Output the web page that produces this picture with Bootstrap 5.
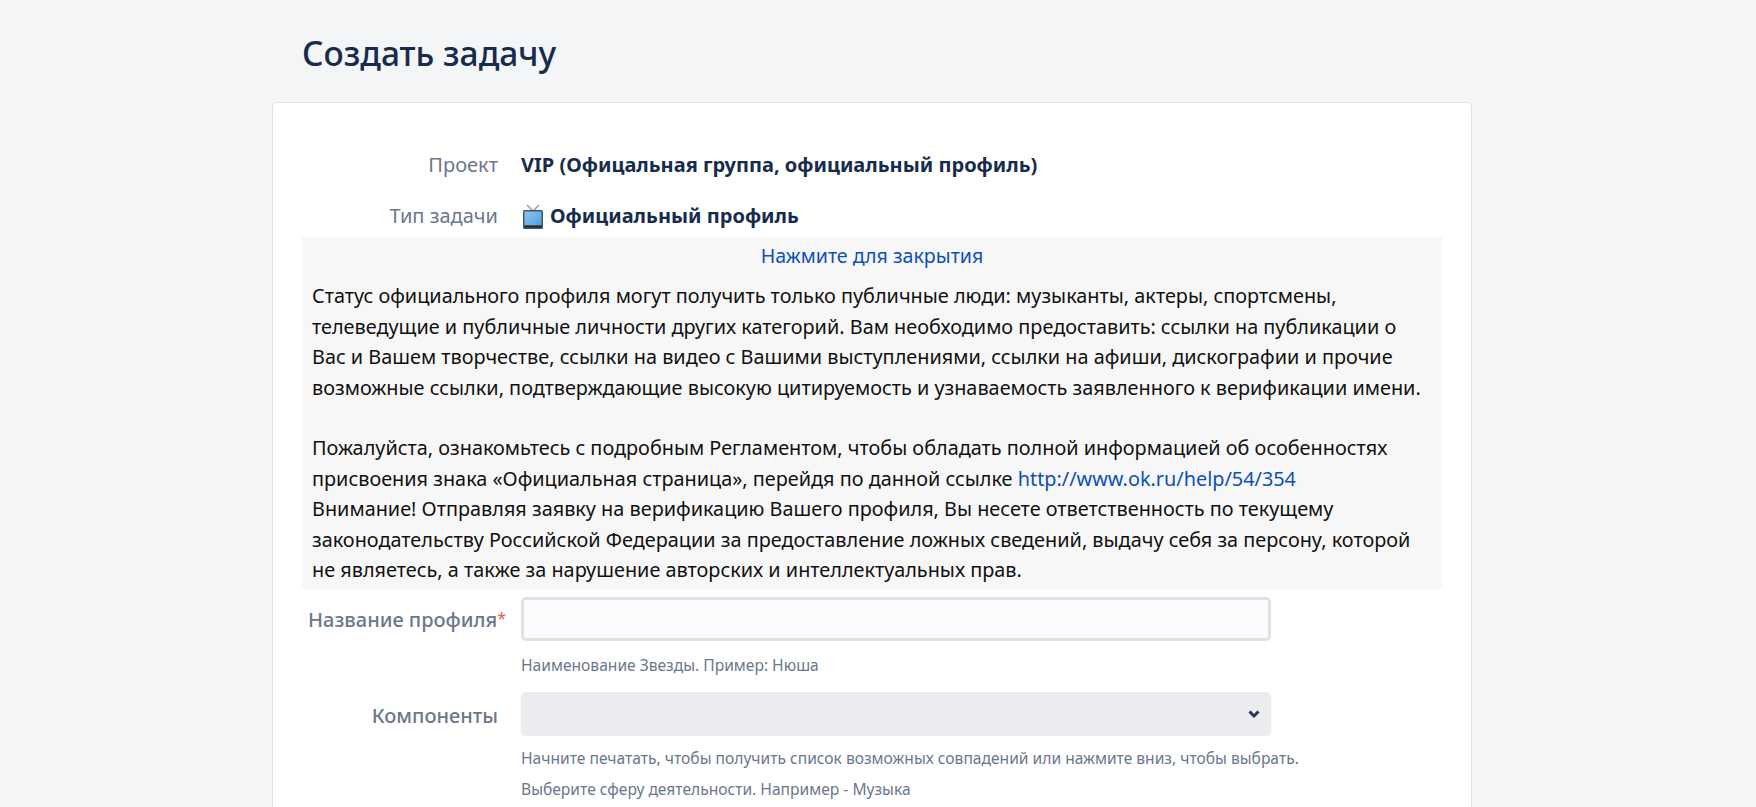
<!DOCTYPE html>
<html lang="ru">
  <head>
    <meta charset="utf-8"/>
    <title>Создать задачу</title>
    <link href="https://cdn.jsdelivr.net/npm/bootstrap@5.3.0/dist/css/bootstrap.min.css" rel="stylesheet"/>
    <style>
      html, body { height: 807px; overflow: hidden; }
      body { background: #f4f5f7; color: #172b4d; font-family: "Noto Sans", sans-serif; font-size: 20px; }
      .page-wrap { width: 1200px; margin-left: 272px; }
      .page-title { font-size: 33.5px; font-weight: 500; line-height: 42px; margin: 0; padding: 32px 30px 28px; color: #172b4d; }
      .form-panel { background: #fff; border: 1px solid #dfe1e6; border-radius: 5px; padding: 47px 29px 0; height: 800px; }
      .form-line { display: flex; align-items: center; }
      .info-line { height: 30px; }
      .first-line { margin-bottom: 21px; }
      .form-lbl { width: 196px; flex: none; text-align: right; color: #6b778c; font-size: 20px; font-weight: 500; white-space: nowrap; }
      .form-lbl.plain-lbl { font-weight: 400; }
      .form-lbl.name-lbl { padding-top: 2px; }
      .form-val { margin-left: 23px; font-size: 20px; font-weight: 700; }
      .tv-icon { margin: 0 7px 0 2px; }
      .hint-text { margin-left: 219px; font-size: 15.6px; color: #6b778c; line-height: 22px; }
      .hint-first { margin-top: 13px; }
      .hint-second { margin-top: 11px; }
      .hint-third { margin-top: 9px; }
      .desc-box { background: #f7f7f7; color: #111; font-size: 19.85px; line-height: 30.4px; padding: 4px 10px 0; height: 352px; margin-top: 6px; white-space: nowrap; }
      .close-row { margin-bottom: 10px; font-size: 19.6px; }
      .close-link { color: #0c50b8; text-decoration: none; }
      .req-star { color: #e5604a; font-weight: 400; font-size: 16px; margin-right: -8px; vertical-align: 3px; }
      .text-fld { width: 750px; height: 44px; margin-left: 23px; background: #fafbfc; border: 3px solid #dfe1e6; border-radius: 5px; }
      .select-fld { width: 750px; height: 44px; margin-left: 23px; background: #ebecf0; border-radius: 5px; padding-right: 11px; }
    </style>
  </head>
  <body>
    <div class="page-wrap">
      <h1 class="page-title">Создать задачу</h1>
      <div class="form-panel">
        <div class="form-line info-line first-line">
          <div class="form-lbl plain-lbl">Проект</div>
          <div class="form-val">VIP (Офицальная группа, официальный профиль)</div>
        </div>
        <div class="form-line info-line">
          <div class="form-lbl plain-lbl">Тип задачи</div>
          <div class="form-val d-flex align-items-center">
            <svg class="tv-icon" width="20" height="25" viewBox="0 0 20 25">
              <defs>
                <linearGradient id="tvScreen" x1="0" y1="0" x2="1" y2="1">
                  <stop offset="0" stop-color="#8cc8f2"/>
                  <stop offset="1" stop-color="#4f9fe0"/>
                </linearGradient>
              </defs>
              <path d="M4 1l6 6 6-6" fill="none" stroke="#9aa3ab" stroke-width="1.6"/>
              <rect x="0" y="6" width="20" height="19" rx="1.5" fill="#46545f"/>
              <rect x="1.5" y="7.5" width="17" height="13.5" fill="url(#tvScreen)"/>
              <rect x="1.5" y="22" width="17" height="1.5" fill="#1d2730"/>
            </svg>
            Официальный профиль
          </div>
        </div>
        <div class="desc-box">
          <div class="text-center close-row"><a class="close-link" href="#">Нажмите для закрытия</a></div>
          Статус официального профиля могут получить только публичные люди: музыканты, актеры, спортсмены,<br>
          телеведущие и публичные личности других категорий. Вам необходимо предоставить: ссылки на публикации о<br>
          Вас и Вашем творчестве, ссылки на видео с Вашими выступлениями, ссылки на афиши, дискографии и прочие<br>
          возможные ссылки, подтверждающие высокую цитируемость и узнаваемость заявленного к верификации имени.<br><br>
          Пожалуйста, ознакомьтесь с подробным Регламентом, чтобы обладать полной информацией об особенностях<br>
          присвоения знака «Официальная страница», перейдя по данной ссылке <a class="close-link" href="#">http://www.ok.ru/help/54/354</a><br>
          Внимание! Отправляя заявку на верификацию Вашего профиля, Вы несете ответственность по текущему<br>
          законодательству Российской Федерации за предоставление ложных сведений, выдачу себя за персону, которой<br>
          не являетесь, а также за нарушение авторских и интеллектуальных прав.
        </div>
        <div class="form-line mt-2">
          <div class="form-lbl name-lbl">Название профиля<span class="req-star">*</span></div>
          <div class="text-fld"></div>
        </div>
        <div class="hint-text hint-first">Наименование Звезды. Пример: Нюша</div>
        <div class="form-line mt-3">
          <div class="form-lbl pt-1">Компоненты</div>
          <div class="select-fld d-flex align-items-center justify-content-end">
            <svg width="12" height="9" viewBox="0 0 12 9"><path d="M1.5 1.5l4.5 4.5 4.5-4.5" fill="none" stroke="#253858" stroke-width="3"/></svg>
          </div>
        </div>
        <div class="hint-text hint-second">Начните печатать, чтобы получить список возможных совпадений или нажмите вниз, чтобы выбрать.</div>
        <div class="hint-text hint-third">Выберите сферу деятельности. Например - Музыка</div>
      </div>
    </div>
  </body>
</html>
